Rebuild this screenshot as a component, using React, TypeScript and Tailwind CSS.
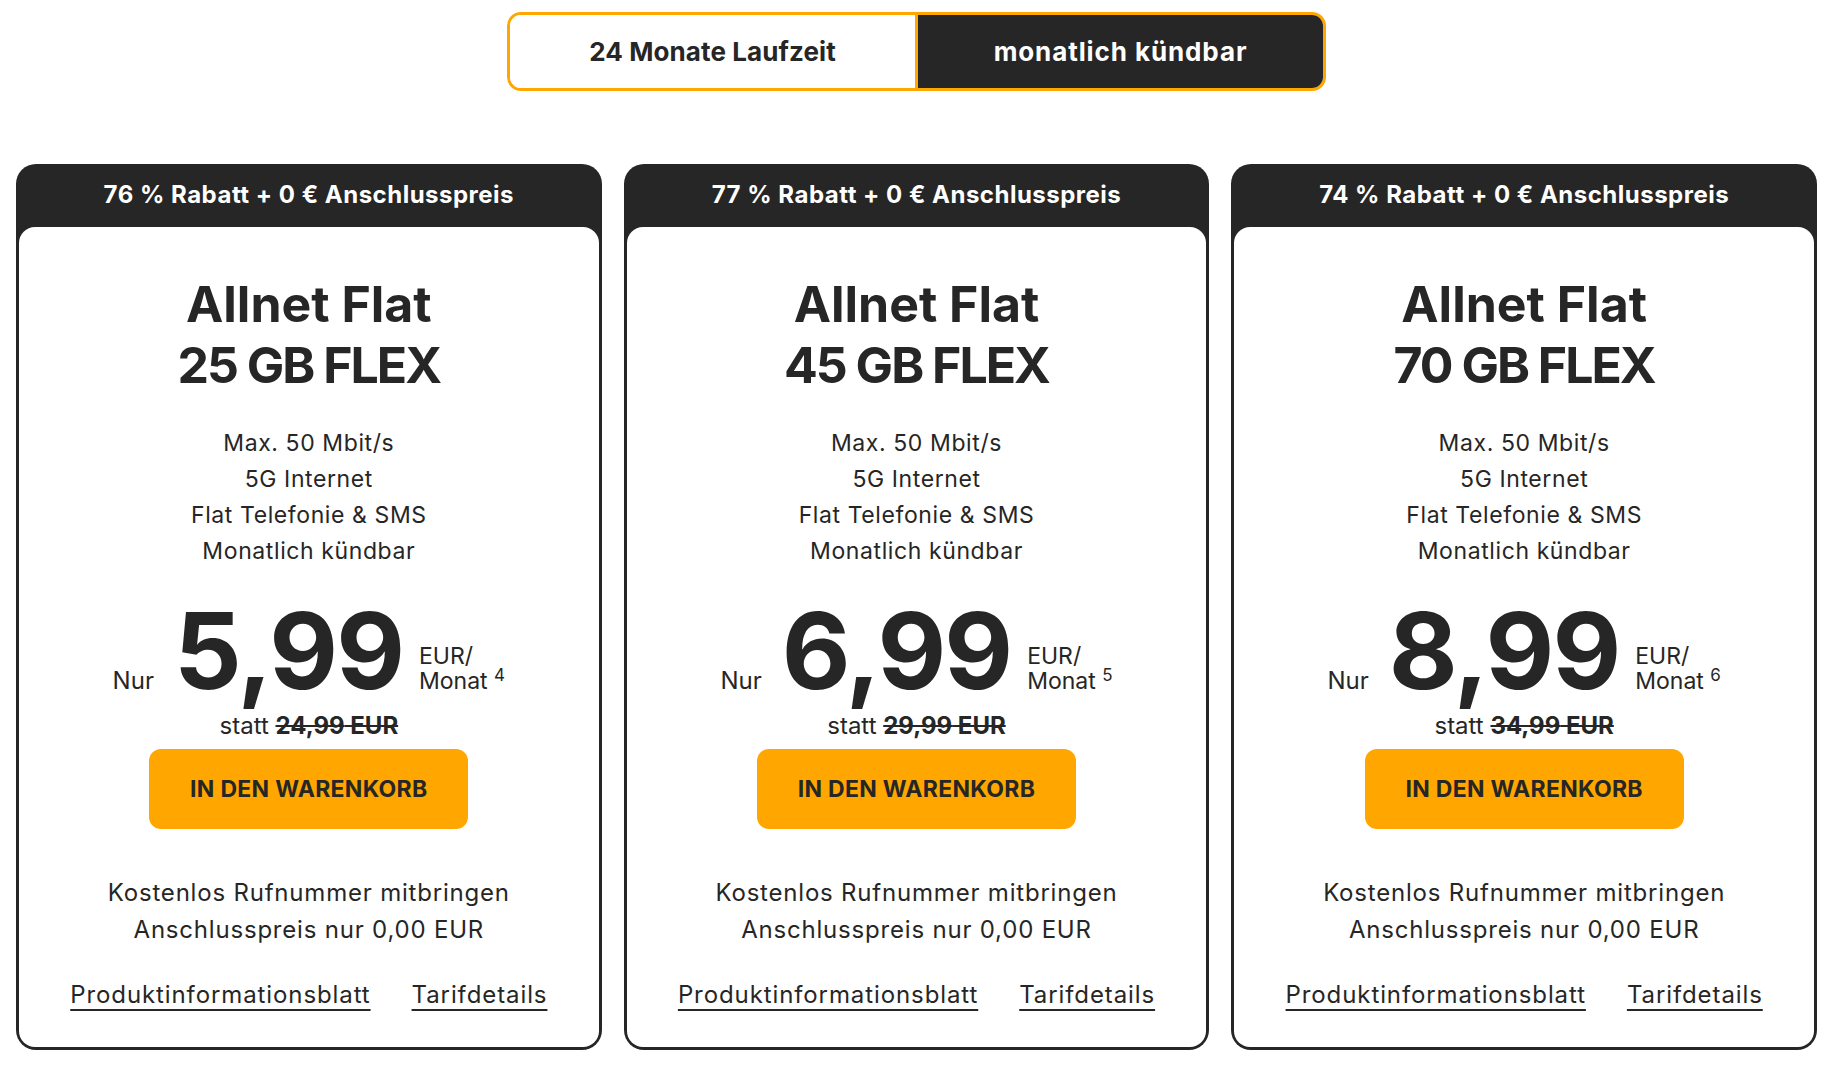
import React from 'react';

interface Plan {
  discount: string;
  gb: string;
  price: string;
  old: string;
  note: string;
}

const plans: Plan[] = [
  { discount: '76', gb: '25', price: '5,99', old: '24,99', note: '4' },
  { discount: '77', gb: '45', price: '6,99', old: '29,99', note: '5' },
  { discount: '74', gb: '70', price: '8,99', old: '34,99', note: '6' },
];

const features = ['Max. 50 Mbit/s', '5G Internet', 'Flat Telefonie & SMS', 'Monatlich kündbar'];

const PlanCard: React.FC<{ plan: Plan }> = ({ plan }) => {
  return (
    <div className="flex h-[886px] flex-col rounded-[20px] bg-[#262626] px-[3px] pb-[3px]">
      {/* Banner */}
      <div className="flex h-[63px] items-center justify-center pb-[2px] text-[24px] font-bold tracking-[0.5px] text-white">
        {plan.discount} % Rabatt + 0 € Anschlusspreis
      </div>

      {/* Inhalt */}
      <div className="flex flex-1 flex-col items-center rounded-[16px] bg-white pt-[47px]">
        <h3 className="text-center text-[50px] font-bold leading-[61px]">
          <span className="block">Allnet Flat</span>
          <span className="block tracking-[-2px]">{plan.gb} GB FLEX</span>
        </h3>

        <ul className="mt-[29px] text-center text-[23px] leading-[36px] tracking-[0.6px]">
          {features.map((f) => (
            <li key={f}>{f}</li>
          ))}
        </ul>

        {/* Preis */}
        <div className="mt-[29px] flex items-baseline-last">
          <span className="mr-[20px] text-[24px]">Nur</span>
          <span className="text-[106px] font-bold leading-none tracking-[-2px]">{plan.price}</span>
          <span className="ml-[16px] text-[23px] leading-[25px]">
            <span className="block">EUR/</span>
            <span className="block">
              Monat <sup className="text-[17px]">{plan.note}</sup>
            </span>
          </span>
        </div>

        <div className="mt-[8px] text-[24px] leading-[28px]">
          statt <span className="font-bold line-through decoration-2">{plan.old} EUR</span>
        </div>

        <button className="mt-[9px] flex h-[80px] w-[319px] items-center justify-center rounded-[12px] bg-[#ffa600] text-[23px] font-bold uppercase tracking-[0.3px]">
          In den Warenkorb
        </button>

        <div className="mt-[45px] text-center text-[24px] leading-[37px] tracking-[0.8px]">
          <p>Kostenlos Rufnummer mitbringen</p>
          <p>Anschlusspreis nur 0,00 EUR</p>
        </div>

        <div className="mt-[29px] flex gap-[41px] text-[24px] tracking-[0.9px]">
          <a className="underline decoration-2 underline-offset-[6px]">Produktinformationsblatt</a>
          <a className="underline decoration-2 underline-offset-[6px]">Tarifdetails</a>
        </div>
      </div>
    </div>
  );
};

export default function App() {
  return (
    <div className="min-h-screen bg-white font-['Inter','Liberation_Sans',sans-serif] text-[#262626]">
      <div className="w-[1833px]">
        {/* Laufzeit-Umschalter */}
        <div className="flex justify-center pt-[12px]">
          <div className="flex h-[79px] w-[819px] overflow-hidden rounded-[14px] border-[3px] border-[#ffa600]">
            <button className="flex-1 bg-white text-[26px] font-bold tracking-[0.1px]">24 Monate Laufzeit</button>
            <button className="flex-1 border-l-[3px] border-[#ffa600] bg-[#262626] text-[26px] font-bold tracking-[0.9px] text-white">
              monatlich kündbar
            </button>
          </div>
        </div>

        <div className="mt-[73px] grid grid-cols-3 gap-[22px] px-[16px]">
          {plans.map((p) => (
            <PlanCard key={p.gb} plan={p} />
          ))}
        </div>
      </div>
    </div>
  );
}
